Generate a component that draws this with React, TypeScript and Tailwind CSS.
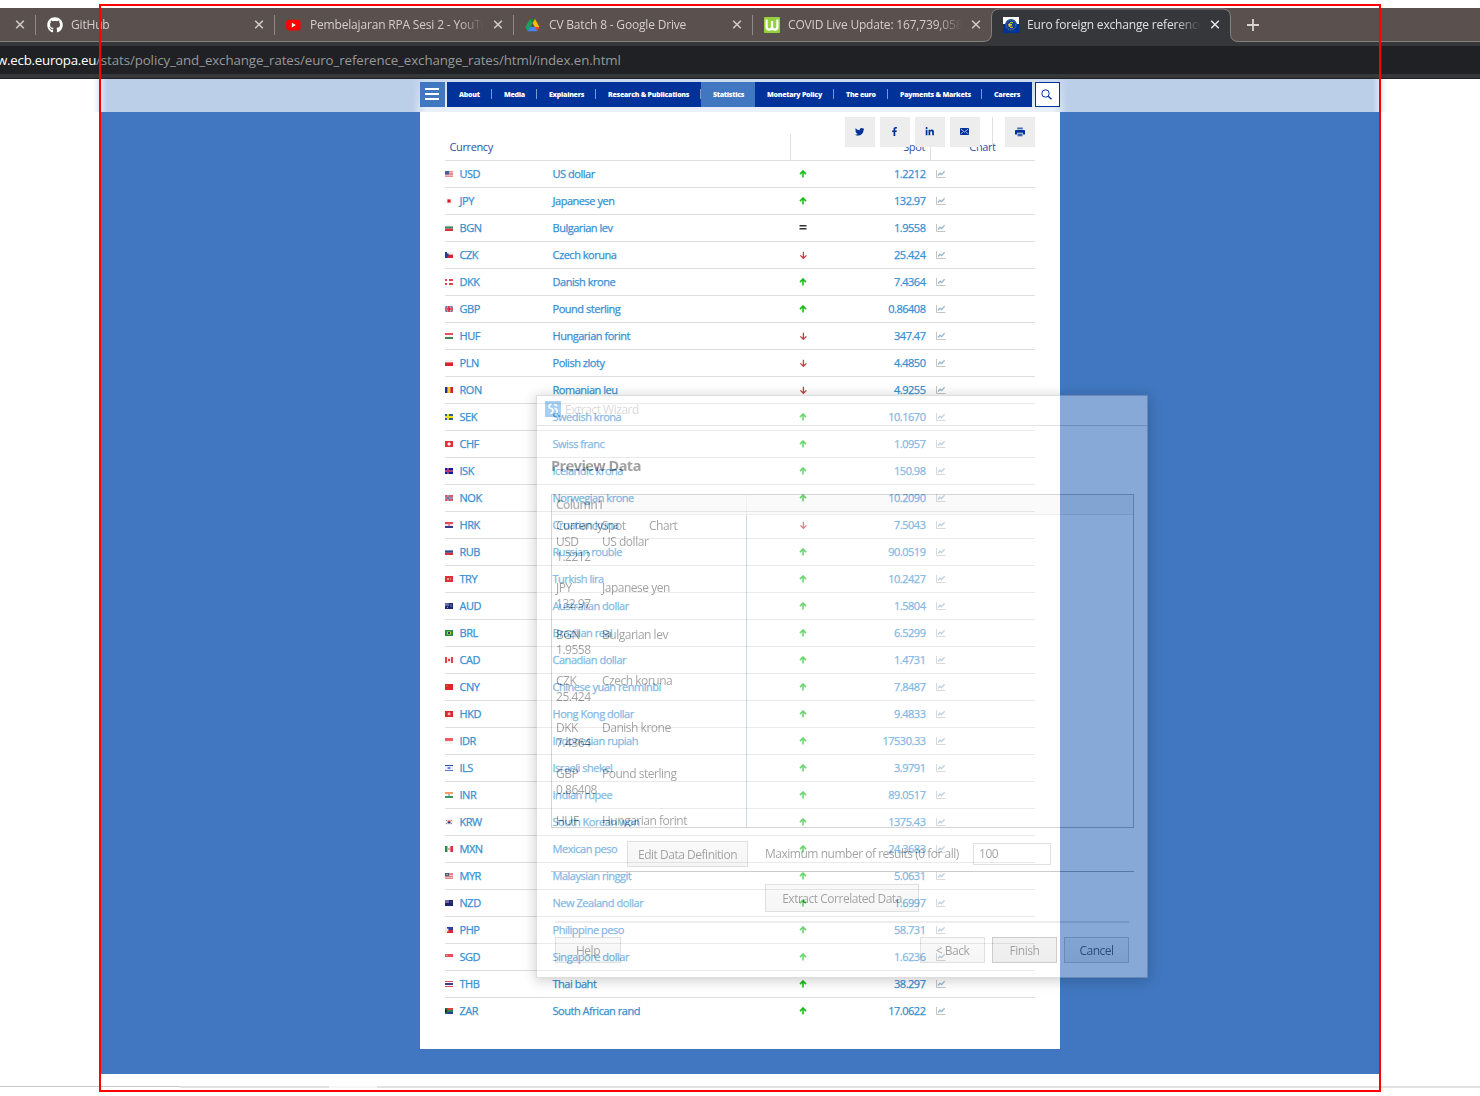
import React from "react";
import { FaTwitter, FaFacebookF, FaLinkedinIn, FaGithub } from "react-icons/fa";

type Rect = [number, number, number, number, string];

const hStripes = (...c: string[]): Rect[] =>
  c.map((color, i) => [0, (i * 6) / c.length, 8, 6 / c.length, color] as Rect);
const vStripes = (...c: string[]): Rect[] =>
  c.map((color, i) => [(i * 8) / c.length, 0, 8 / c.length, 6, color] as Rect);
const cross = (bg: string, outer: string, inner: string): Rect[] => [
  [0, 0, 8, 6, bg],
  [2, 0, 2, 6, outer],
  [0, 2, 8, 2, outer],
  [2.5, 0, 1, 6, inner],
  [0, 2.5, 8, 1, inner],
];

const flags: Record<string, Rect[]> = {
  USD: [[0, 0, 8, 6, "#ee8b90"], [0, 1, 8, 1, "#f6b9bb"], [0, 4, 8, 1, "#f6b9bb"], [0, 0, 4, 3.5, "#4a5aa5"]],
  JPY: [[0, 0, 8, 6, "#f6f6f6"], [2.4, 1.4, 3.2, 3.2, "#e0142a"]],
  BGN: [[0, 0, 8, 1.4, "#f4f4f4"], [0, 1.4, 8, 2.2, "#3c8a63"], [0, 3.6, 8, 2.4, "#d4343c"]],
  CZK: [[0, 0, 8, 2.6, "#f0f0f0"], [0, 2.6, 8, 3.4, "#dc2030"], [0, 0, 2, 6, "#233c8c"], [2, 1.5, 1.6, 3, "#233c8c"]],
  DKK: cross("#e04450", "#ffffff", "#ffffff"),
  GBP: [[0, 0, 8, 6, "#6a6db0"], [0, 0, 1, 1, "#d8a0b4"], [7, 0, 1, 1, "#d8a0b4"], [0, 5, 1, 1, "#d8a0b4"], [7, 5, 1, 1, "#d8a0b4"], [2.6, 0, 2.8, 6, "#f4d0d4"], [0, 1.8, 8, 2.4, "#f4d0d4"], [3.2, 0, 1.6, 6, "#dc2038"], [0, 2.3, 8, 1.4, "#dc2038"]],
  HUF: hStripes("#e25058", "#f4f4f4", "#3c8a55"),
  PLN: [[0, 0, 8, 2.4, "#f0f0f0"], [0, 2.4, 8, 3.6, "#e02030"]],
  RON: vStripes("#1a2f8c", "#f8d020", "#d01c2c"),
  SEK: cross("#2a5f9a", "#f4dc20", "#f4dc20"),
  CHF: [[0, 0, 8, 6, "#e0303a"], [3.4, 1.3, 1.4, 3.4, "#fff"], [2.4, 2.3, 3.4, 1.4, "#fff"]],
  ISK: cross("#0a17a8", "#6a6ad0", "#e02040"),
  NOK: cross("#e25560", "#f4dce0", "#3f4f90"),
  HRK: [...hStripes("#e24850", "#f4e4e4", "#2c3c90"), [3, 1.4, 2, 2.4, "#e08088"]],
  RUB: [[0, 0, 8, 1.4, "#f4f4f4"], [0, 1.4, 8, 2.4, "#2c4c98"], [0, 3.8, 8, 2.2, "#d43040"]],
  TRY: [[0, 0, 8, 6, "#e0303a"], [2, 2, 2, 2, "#f0a0a4"], [5, 2.5, 1, 1, "#f8c8cc"]],
  AUD: [[0, 0, 8, 6, "#1c2870"], [0, 0, 4, 3, "#6a6aa8"], [5.5, 1, 1, 3, "#8088c0"], [2, 4, 1, 1, "#a0a8d0"]],
  BRL: [[0, 0, 8, 6, "#2a8a48"], [2, 1.5, 4, 3, "#d8cc38"], [3, 2, 2, 2, "#24407c"]],
  CAD: [[0, 0, 8, 6, "#f8f0f0"], [0, 0, 2, 6, "#e04048"], [6, 0, 2, 6, "#e04048"], [3, 1.8, 2, 2.4, "#e04048"]],
  CNY: [[0, 0, 8, 6, "#e02428"], [1, 1, 1.5, 1.5, "#e86030"]],
  HKD: [[0, 0, 8, 6, "#e0242e"], [2.8, 1.6, 2.6, 2.6, "#f4c0c4"]],
  IDR: hStripes("#e66068", "#f4f0f0"),
  ILS: [[0, 0, 8, 6, "#eef0fa"], [0, 0, 8, 1, "#2c48b8"], [0, 5, 8, 1, "#5c74cc"], [2.6, 2, 2.8, 2, "#6c84d0"]],
  INR: [...hStripes("#f0a060", "#f8f8f4", "#3c9860"), [3.4, 2.3, 1.2, 1.4, "#5868a0"]],
  KRW: [[0, 0, 8, 6, "#f4f4f4"], [2.6, 1.6, 3, 1.5, "#d83848"], [2.6, 3, 3, 1.5, "#304890"], [1, 1, 1, 1, "#888"], [6, 1, 1, 1, "#888"], [1, 4, 1, 1, "#888"], [6, 4, 1, 1, "#888"]],
  MXN: [...vStripes("#2c8a50", "#f4f4f0", "#dc3040"), [3.3, 2.2, 1.4, 1.6, "#a08860"]],
  MYR: [[0, 0, 8, 6, "#ec8088"], [0, 2, 8, 0.8, "#f6c8cc"], [0, 4, 8, 0.8, "#f6c8cc"], [0, 0, 4, 3.2, "#4a5a90"], [1.4, 1, 1.4, 1.2, "#d8c860"]],
  NZD: [[0, 0, 8, 6, "#1c2470"], [0, 0, 4, 3, "#6c68a4"], [5.6, 1.4, 1.2, 1.2, "#a05080"]],
  PHP: [[0, 0, 8, 3, "#2c40a0"], [0, 3, 8, 3, "#d82838"], [0, 0, 2, 6, "#f4ecd8"], [2, 1.6, 1.4, 2.8, "#f4ecd8"]],
  SGD: [...hStripes("#e4505a", "#f6f4f4"), [1.4, 1, 1, 1, "#f8c8cc"]],
  THB: hStripes("#e05060", "#f4f0f4", "#38408c", "#38408c", "#f4f0f4", "#e05060"),
  ZAR: [[0, 0, 8, 3, "#d84838"], [0, 3, 8, 3, "#283c90"], [0, 2, 8, 2, "#2c8050"], [0, 0, 2.5, 6, "#207048"], [0, 1.6, 1.6, 2.8, "#181818"]],
};

const rows: [string, string, "up" | "down" | "same", string][] = [
  ["USD", "US dollar", "up", "1.2212"],
  ["JPY", "Japanese yen", "up", "132.97"],
  ["BGN", "Bulgarian lev", "same", "1.9558"],
  ["CZK", "Czech koruna", "down", "25.424"],
  ["DKK", "Danish krone", "up", "7.4364"],
  ["GBP", "Pound sterling", "up", "0.86408"],
  ["HUF", "Hungarian forint", "down", "347.47"],
  ["PLN", "Polish zloty", "down", "4.4850"],
  ["RON", "Romanian leu", "down", "4.9255"],
  ["SEK", "Swedish krona", "up", "10.1670"],
  ["CHF", "Swiss franc", "up", "1.0957"],
  ["ISK", "Icelandic krona", "up", "150.98"],
  ["NOK", "Norwegian krone", "up", "10.2090"],
  ["HRK", "Croatian kuna", "down", "7.5043"],
  ["RUB", "Russian rouble", "up", "90.0519"],
  ["TRY", "Turkish lira", "up", "10.2427"],
  ["AUD", "Australian dollar", "up", "1.5804"],
  ["BRL", "Brazilian real", "up", "6.5299"],
  ["CAD", "Canadian dollar", "up", "1.4731"],
  ["CNY", "Chinese yuan renminbi", "up", "7.8487"],
  ["HKD", "Hong Kong dollar", "up", "9.4833"],
  ["IDR", "Indonesian rupiah", "up", "17530.33"],
  ["ILS", "Israeli shekel", "up", "3.9791"],
  ["INR", "Indian rupee", "up", "89.0517"],
  ["KRW", "South Korean won", "up", "1375.43"],
  ["MXN", "Mexican peso", "up", "24.3683"],
  ["MYR", "Malaysian ringgit", "up", "5.0631"],
  ["NZD", "New Zealand dollar", "up", "1.6997"],
  ["PHP", "Philippine peso", "up", "58.731"],
  ["SGD", "Singapore dollar", "up", "1.6236"],
  ["THB", "Thai baht", "up", "38.297"],
  ["ZAR", "South African rand", "up", "17.0622"],
];

function Flag({ code }: { code: string }) {
  return (
    <svg width="8" height="6" viewBox="0 0 8 6" className="block">
      {flags[code].map(([x, y, w, h, c], i) => (
        <rect key={i} x={x} y={y} width={w} height={h} fill={c} />
      ))}
    </svg>
  );
}

function Trend({ kind }: { kind: "up" | "down" | "same" }) {
  if (kind === "same")
    return (
      <svg width="8" height="8" viewBox="0 0 8 8">
        <path d="M0.5 1.8H7.5M0.5 4.8H7.5" stroke="#333" strokeWidth="1.4" />
      </svg>
    );
  if (kind === "up")
    return (
      <svg width="8" height="8" viewBox="0 0 8 8">
        <path d="M4 7.4V1.2M1 4.1L4 1L7 4.1" fill="none" stroke="#1cbb1c" strokeWidth="1.6" />
      </svg>
    );
  return (
    <svg width="8" height="8" viewBox="0 0 8 8">
      <path d="M4.4 0.7V7.2M1.4 4.4L4.4 7.3L7.4 4.4" fill="none" stroke="#c83c40" strokeWidth="1.3" />
    </svg>
  );
}

function ChartIcon() {
  return (
    <svg width="10" height="8" viewBox="0 0 10 8" className="block">
      <path d="M0.5 0V7.5H9.5" fill="none" stroke="#c4c4c4" />
      <path d="M2 5.5L4 3.2L5.6 4.6L8.6 1.2" fill="none" stroke="#9bb9cf" strokeWidth="1.4" />
    </svg>
  );
}

function CloseIcon({ bright }: { bright?: boolean }) {
  return (
    <svg width="10" height="9" viewBox="0 0 10 9" className="block shrink-0">
      <path d="M1.2 0.8L8.8 8.2M8.8 0.8L1.2 8.2" stroke={bright ? "#e2e2e3" : "#cfcbca"} strokeWidth="1.6" />
    </svg>
  );
}

const tabIcons = {
  github: <FaGithub size={16} color="#fff" />,
  youtube: (
    <svg width="16" height="16" viewBox="0 0 16 16">
      <rect x="0.2" y="2.8" width="14.3" height="10.6" rx="2.4" fill="#f00" />
      <path d="M5.8 5.8V10.4L9.8 8.1Z" fill="#fff" />
    </svg>
  ),
  drive: (
    <svg width="16" height="16" viewBox="0 0 16 16">
      <path d="M5 1.9L0.2 10.3L2.6 14.2L7.6 6Z" fill="#1aa15d" />
      <path d="M5 1.9H10L7.6 6Z" fill="#188038" />
      <path d="M10 1.9L14.6 10.3H10L7.6 6Z" fill="#ffba00" />
      <path d="M5.1 10.1H10L12.4 14.2H2.6Z" fill="#4285f4" />
      <path d="M10 10.1H14.7L12.4 14.2Z" fill="#ea4335" />
    </svg>
  ),
  meter: (
    <svg width="16" height="16" viewBox="0 0 16 16">
      <rect width="16" height="16" rx="0.8" fill="#94d13d" />
      <path d="M2.6 2.5V9.5Q2.6 12.6 5.2 12.6Q8 12.6 8 9.5V4M8 9.5Q8 12.6 10.8 12.6Q13.4 12.6 13.4 9.5V2.5" fill="none" stroke="#fff" strokeWidth="2.2" />
    </svg>
  ),
  ecb: (
    <svg width="16" height="16" viewBox="0 0 16 16">
      <rect width="16" height="8" fill="#fff" />
      <rect y="7" width="16" height="9" fill="#003299" />
      <circle cx="8" cy="8" r="6" fill="#0c3c94" />
      <circle cx="8" cy="8" r="4.9" fill="none" stroke="#6f90a8" strokeWidth="0.9" strokeDasharray="1.2 1.2" />
      <path d="M10 5.8Q6.4 4.4 6.4 8Q6.4 11.6 10 10.2M5.2 7.4H9M5.2 8.8H8.8" fill="none" stroke="#e8d820" strokeWidth="1" />
    </svg>
  ),
};

const fade = "[mask-image:linear-gradient(to_right,#000_148px,transparent_174px)]";

function Tab({ icon, title, active }: { icon: keyof typeof tabIcons; title: string; active?: boolean }) {
  return (
    <div className="relative flex h-[33px] w-[239px] shrink-0 items-center pl-3">
      {active && (
        <svg width="256" height="34" viewBox="0 0 256 34" className="absolute -left-2 top-0">
          <path d="M0 34V33.5Q8.5 33.5 8.5 25.5V9Q8.5 1 16.5 1H239.5Q247.5 1 247.5 9V25.5Q247.5 33.5 255.5 33.5V34Z" fill="#36373b" />
          <path d="M0 33.5Q8.5 33.5 8.5 25.5V9Q8.5 1 16.5 1H239.5Q247.5 1 247.5 9V25.5Q247.5 33.5 255.5 33.5" fill="none" stroke="#858180" />
        </svg>
      )}
      <span className="relative w-4 shrink-0">{tabIcons[icon]}</span>
      <span
        className={`relative ml-2 w-[176px] shrink-0 overflow-hidden whitespace-nowrap text-[12px] leading-4 tracking-[-0.18px] ${fade} ${active ? "text-[#dfe0e2]" : "text-[#d3cecd]"}`}
      >
        {title}
      </span>
      <span className="relative ml-[7px]">
        <CloseIcon bright={active} />
      </span>
    </div>
  );
}

function Divider() {
  return <span className="-mr-px mt-[7px] block h-5 w-px shrink-0 bg-[#908a88]" />;
}

const nav: [string, string, boolean][] = [
  ["About", "w-[45px]", true],
  ["Media", "w-[45px]", true],
  ["Explainers", "w-[59px]", true],
  ["Research & Publications", "w-[105px]", true],
  ["Statistics", "w-[54px] bg-[#4077c0]", false],
  ["Monetary Policy", "w-[79px]", true],
  ["The euro", "w-[54px]", true],
  ["Payments & Markets", "w-[94px]", true],
  ["Careers", "w-[50px]", false],
];

function SiteHeader() {
  return (
    <header className="relative flex h-[33px] w-full justify-center pt-[3px]">
      <div className="absolute left-[93px] top-0 h-[33px] w-[1294px] bg-[linear-gradient(to_right,#bbcfe900,#bbcfe9_14px,#bbcfe9_1280px,#bbcfe900)]" />
      <div className="absolute left-[412px] top-0 h-[33px] w-[656px] bg-[linear-gradient(to_bottom,#fff3,#ffffffb8)] [mask-image:linear-gradient(to_right,transparent,#000_14px,#000_642px,transparent)]" />
      <div className="relative flex">
        <div className="flex h-[25px] w-[25px] flex-col items-start justify-center gap-[3px] bg-[#4077c0] pb-px pl-[5px]">
          <span className="h-[2px] w-[14px] bg-white" />
          <span className="h-[2px] w-[14px] bg-white" />
          <span className="h-[2px] w-[14px] bg-white" />
        </div>
        <nav className="ml-[2px] flex h-[25px] bg-[#003299] text-[7px] font-extrabold leading-[25px] tracking-[-0.25px] text-white">
          {nav.map(([t, w, sep]) => (
            <div key={t} className={`relative flex shrink-0 items-center whitespace-nowrap pl-3 ${w}`}>
              {t}
              {sep && <span className="absolute right-0 top-[7px] h-[10px] w-px bg-[#7f98cc]" />}
            </div>
          ))}
        </nav>
        <div className="ml-[3px] flex h-[25px] w-[25px] items-center justify-center border border-[#003299] bg-white pb-px pr-[2px]">
          <svg width="11" height="11" viewBox="0 0 11 11">
            <circle cx="4.5" cy="4.5" r="3.7" fill="none" stroke="#003299" />
            <path d="M7.2 7.2L10.5 10.3" stroke="#003299" strokeWidth="1.3" />
          </svg>
        </div>
      </div>
    </header>
  );
}

function ShareBar() {
  const box = "flex h-[30px] w-[30px] items-center justify-center bg-[#ededed] pr-px pb-px";
  return (
    <div className="absolute right-[25px] top-[5px] flex gap-[5px] text-[#003299]">
      <div className={box}><FaTwitter size={9.5} /></div>
      <div className={box}><FaFacebookF size={9} /></div>
      <div className={box}><FaLinkedinIn size={9.5} /></div>
      <div className={box}>
        <svg width="9" height="7" viewBox="0 0 9 7">
          <rect width="9" height="7" rx="0.8" fill="#003299" />
          <path d="M1 1.2L4.5 4L8 1.2M1 5.8L3 3.8M8 5.8L6 3.8" fill="none" stroke="#dfe4f0" strokeWidth="0.8" />
        </svg>
      </div>
      <div className="ml-[7px] mr-[7px] h-[30px] w-px bg-[#e0e0e0]" />
      <div className={box}>
        <svg width="10" height="10" viewBox="0 0 10 10">
          <path d="M2.2 0.5H7.8V2.4H2.2Z" fill="#4a6cb4" />
          <path d="M0.8 3H9.2Q10 3 10 3.8V7.4H8V5.8H2V7.4H0V3.8Q0 3 0.8 3Z" fill="#003299" />
          <path d="M2.5 6.5H7.5V9.3H2.5Z" fill="#3e62b0" />
        </svg>
      </div>
    </div>
  );
}

function RatesTable() {
  return (
    <div className="relative h-[937px] w-[640px] bg-white px-[25px] pt-[22px] text-[11px] tracking-[-0.47px]">
      <div className="flex h-[27px] border-b border-[#dedede] leading-[26px] tracking-[-0.38px] text-[#2b51a8]">
        <div className="w-[345px] pl-[4.5px]">Currency</div>
        <div className="w-[140px] border-l border-[#dedede] pr-[5px] text-right">Spot</div>
        <div className="w-[105px] border-l border-[#dedede] pr-px text-center">Chart</div>
      </div>
      <div>
        {rows.map(([code, name, kind, spot]) => (
          <div
            key={code}
            className="flex h-[27px] items-center border-b border-[#dedede] text-[#3790d2] [-webkit-text-stroke:0.25px_#3790d2] last:border-transparent"
          >
            <div className="w-[14.5px]"><Flag code={code} /></div>
            <div className="w-[93px]">{code}</div>
            <div className="w-[246.5px]">{name}</div>
            <div className="flex w-[60px]"><Trend kind={kind} /></div>
            <div className="w-[66.5px] text-right tracking-[-0.48px]">{spot}</div>
            <div className="ml-[10.5px]"><ChartIcon /></div>
          </div>
        ))}
      </div>
      <ShareBar />
    </div>
  );
}

const previewLines: [string, string, string][] = [
  ["Currency", "Spot", "Chart"],
  ["USD", "US dollar", ""],
  ["1.2212", "", ""],
  ["", "", ""],
  ["JPY", "Japanese yen", ""],
  ["132.97", "", ""],
  ["", "", ""],
  ["BGN", "Bulgarian lev", ""],
  ["1.9558", "", ""],
  ["", "", ""],
  ["CZK", "Czech koruna", ""],
  ["25.424", "", ""],
  ["", "", ""],
  ["DKK", "Danish krone", ""],
  ["7.4364", "", ""],
  ["", "", ""],
  ["GBP", "Pound sterling", ""],
  ["0.86408", "", ""],
  ["", "", ""],
  ["HUF", "Hungarian forint", ""],
];

function DialogButton({ label, className }: { label: string; className: string }) {
  return (
    <div className={`flex shrink-0 items-center justify-center whitespace-nowrap border border-[#acacac] bg-[linear-gradient(#f2f2f2,#e6e6e6)] pt-px ${className}`}>
      {label}
    </div>
  );
}

function ExtractWizard() {
  return (
    <div className="absolute left-[536px] top-[395px] flex h-[583px] w-[612px] flex-col border border-[#a8a8a8] bg-white pl-px text-[12px] tracking-[-0.48px] text-black opacity-[0.37] shadow-[0_2px_12px_1px_rgba(0,0,0,0.5)]">
      <div className="-ml-px flex h-[30px] shrink-0 items-center border-b border-[#b5b5b5] pl-[8px] text-[#999]">
        <svg width="16" height="16" viewBox="0 0 16 16" className="-mt-[3px]">
          <rect width="16" height="16" fill="#1280dc" />
          <path d="M6.6 3.2Q3.8 3.4 4 5.6Q4.2 7.2 6.2 7.6Q8 8 8 9.8Q8 12 5.4 12.6" fill="none" stroke="#fff" strokeWidth="1.5" />
          <path d="M9 3.4Q11.6 3.4 11.8 5.4M9.4 7.6Q12.2 8 12.2 10.2Q12.2 12.6 9.6 13" fill="none" stroke="#fff" strokeWidth="1.5" />
        </svg>
        <span className="-mt-px ml-[4px]">Extract Wizard</span>
      </div>
      <div className="ml-[13px] mt-[29px] h-[22px] text-[14.5px] font-bold leading-[22px] tracking-[-0.53px]">Preview Data</div>
      <div className="ml-[13px] mt-[17px] flex h-[334px] w-[583px] shrink-0 flex-col overflow-hidden border border-[#8d8d8d]">
        <div className="flex h-[20px] shrink-0 border-b border-[#d5d5d5] bg-[#f2f2f2] text-[#333]">
          <div className="w-[195px] shrink-0 border-r border-[#d5d5d5] pl-[4px] font-semibold leading-[20px] tracking-[-0.6px]">Column1</div>
        </div>
        <div className="flex w-[195px] grow flex-col border-r border-[#6e97c4] pl-[4px] pt-[3px]">
          {previewLines.map(([a, b, c], i) => (
            <div key={i} className="flex h-[15.5px] shrink-0 whitespace-nowrap leading-[15.5px]">
              <span className="w-[46px] shrink-0">{a}</span>
              <span className={c ? "w-[47px] shrink-0" : "shrink-0"}>{b}</span>
              <span>{c}</span>
            </div>
          ))}
        </div>
      </div>
      <div className="ml-[13px] mt-[13px] flex h-[31px] w-[583px] shrink-0 items-start border-b border-[#777] pl-[76px]">
        <DialogButton label="Edit Data Definition" className="h-[26px] w-[121px]" />
        <span className="ml-[17px] w-[208px] whitespace-nowrap leading-[26px]">Maximum number of results (0 for all)</span>
        <div className="mt-[2px] h-[22px] w-[78px] border border-[#acacac] pl-[5px] leading-[20px]">100</div>
      </div>
      <DialogButton label="Extract Correlated Data" className="ml-[227px] mt-[12px] h-[28px] w-[154px]" />
      <div className="ml-[17px] mt-[9px] h-[2px] w-[574px] shrink-0 bg-[#cfcfcf]" />
      <div className="ml-[17px] mt-[14px] flex w-[574px]">
        <DialogButton label="Help" className="h-[26px] w-[66px]" />
        <DialogButton label="< Back" className="ml-auto h-[26px] w-[65px]" />
        <DialogButton label="Finish" className="ml-[7px] h-[26px] w-[65px] !border-[#777] !bg-[linear-gradient(#dcdcdc,#d2d2d2)]" />
        <DialogButton label="Cancel" className="ml-[7px] h-[26px] w-[65px]" />
      </div>
    </div>
  );
}

export default function App() {
  return (
    <div className="relative flex h-[1096px] w-[1480px] flex-col overflow-hidden bg-white pt-2 font-['Open_Sans','Noto_Sans',sans-serif]">
      <div className="relative flex h-[34px] shrink-0 items-start border-b border-[#858180] bg-[#5a504e]">
        <div className="flex h-[33px] w-[35px] shrink-0 items-center pl-[15px]"><CloseIcon /></div>
        <Divider />
        <Tab icon="github" title="GitHub" />
        <Divider />
        <Tab icon="youtube" title="Pembelajaran RPA Sesi 2 - YouTube" />
        <Divider />
        <Tab icon="drive" title="CV Batch 8 - Google Drive" />
        <Divider />
        <Tab icon="meter" title="COVID Live Update: 167,739,058 Cases" />
        <Tab icon="ecb" title="Euro foreign exchange reference rates" active />
        <svg width="12" height="12" viewBox="0 0 12 12" className="ml-[17px] mt-[11px]">
          <path d="M6 0V12M0 6H12" stroke="#d8d4d3" strokeWidth="1.8" />
        </svg>
      </div>
      <div className="h-[37px] shrink-0 border-b border-[#202124] bg-[#36373b] pt-[4px]">
        <div className="flex h-[28px] items-center overflow-hidden whitespace-nowrap bg-[#202124] text-[13.3px] leading-[29px] text-[#96989b]">
          <span className="-ml-[3px] w-[99px] shrink-0 tracking-[-0.25px] text-white">w.ecb.europa.eu</span>
          <span className="tracking-[-0.09px]">/stats/policy_and_exchange_rates/euro_reference_exchange_rates/html/index.en.html</span>
        </div>
      </div>
      <SiteHeader />
      <main className="mx-auto flex h-[962px] w-[1280px] shrink-0 justify-center bg-[#4077c0]">
        <RatesTable />
      </main>
      <div className="mt-3 flex h-[2px] shrink-0">
        <span className="h-px w-[180px] bg-[#c6c6c6]" />
        <span className="w-[149px] bg-[#e2e2e3]" />
        <span className="w-[48px] bg-[#f6f6f8]" />
        <span className="grow bg-[#e2e2e3]" />
      </div>
      <ExtractWizard />
      <div className="absolute left-[99px] top-[4px] h-[1088px] w-[1282px] border-2 border-[#ff0000]" />
    </div>
  );
}
